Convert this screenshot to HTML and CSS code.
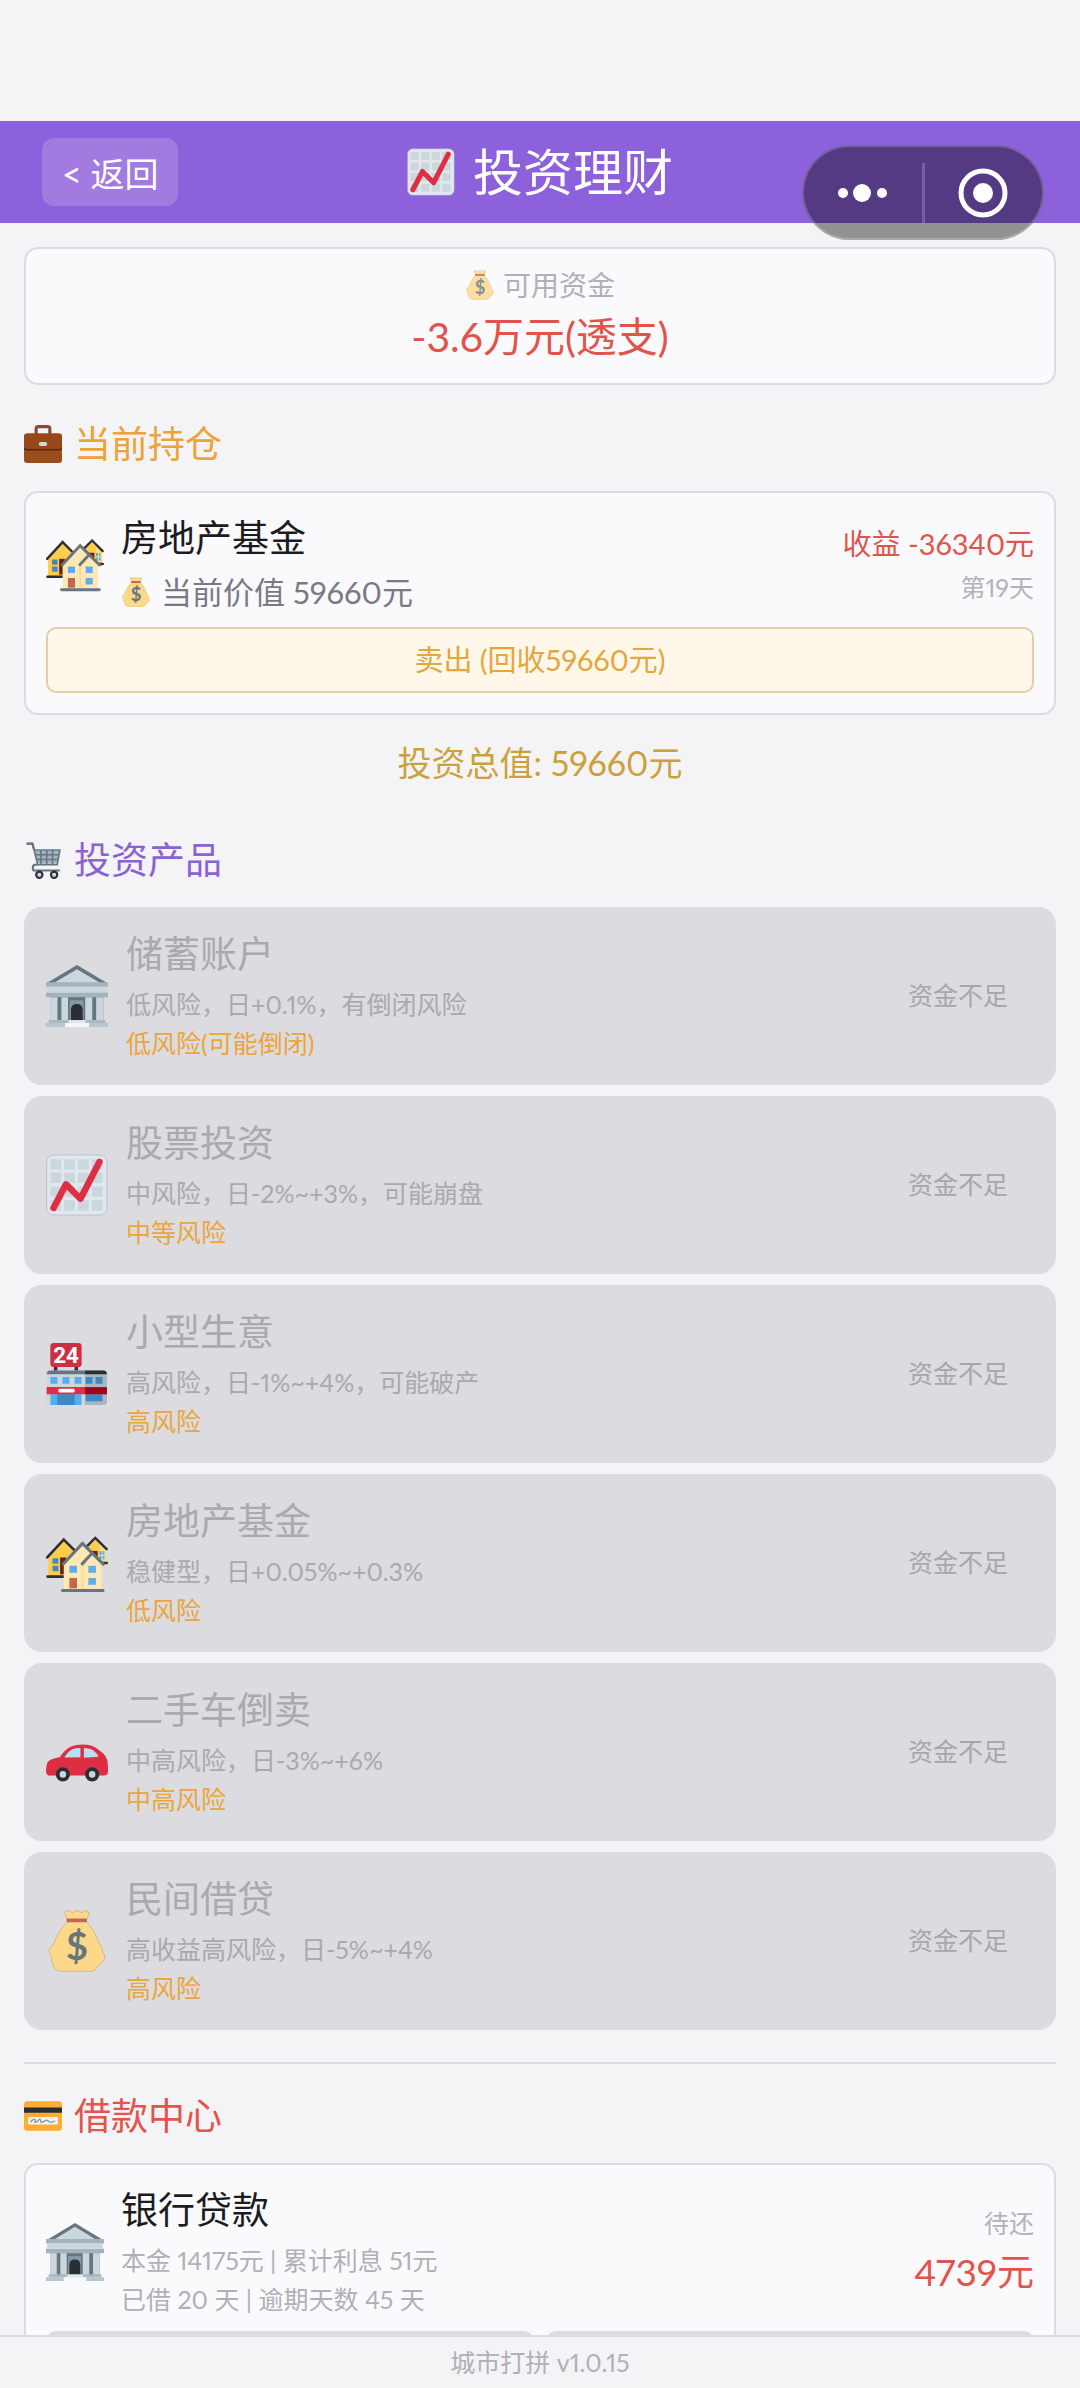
FILE: index.html
```html
<!DOCTYPE html>
<html lang="zh-CN">
<head>
    <meta charset="UTF-8">
    <meta name="viewport" content="width=device-width, initial-scale=1">
    <title>投资理财</title>
    <link rel="stylesheet" href="styles.css">
</head>
<body>
    <!-- 图标 -->
    <svg class="sprite" aria-hidden="true">
        <symbol id="i-chart" viewBox="0 0 36 36">
            <rect x="0.4" y="0.6" width="35" height="34.8" rx="4" fill="#e1e8ed" stroke="#99aab5" stroke-width="0.3"/>
            <path fill="#ccd6dd" d="M2.6 3h6.2v6H2.6zM10.6 3h6.2v6h-6.2zM18.6 3h6.2v6h-6.2zM26.6 3h6.2v6h-6.2zM2.6 10.8h6.2v6H2.6zM10.6 10.8h6.2v6h-6.2zM18.6 10.8h6.2v6h-6.2zM26.6 10.8h6.2v6h-6.2zM2.6 18.8h6.2v6H2.6zM10.6 18.8h6.2v6h-6.2zM18.6 18.8h6.2v6h-6.2zM26.6 18.8h6.2v6h-6.2zM2.6 26.9h6.2v6H2.6zM10.6 26.9h6.2v6h-6.2zM18.6 26.9h6.2v6h-6.2zM26.6 26.9h6.2v6h-6.2z"/>
            <path d="M4.4 31.3 11.6 17.6 20 26 31 4.6" fill="none" stroke="#dd2e44" stroke-width="3.8" stroke-linecap="round" stroke-linejoin="round"/>
        </symbol>
        <symbol id="i-bag" viewBox="0 0 36 36">
            <path fill="#fdd888" stroke="#b29a63" stroke-width="0.3" d="M12.4 5C10.4 2 10.4.4 12.4.5c1.500 0 2 .9 3 .9S17.200.4 18 .4s1.600 1 2.600 1 1.500-.9 3-.9c2 0 1.600 2.500-.2 5.200L23.600 7c3.400 3.700 5.900 8 7.400 13 2 1 1.600 3 2 4.500 1.600 2 1.600 5-1.500 6.500-1.500 1.300-2 4.600-6 4.600H9.500c-3.500 0-5-2-5.700-4.600-1.300-1.500-.2-3-1.100-4.500-1.700-2.700-.9-5 1.700-6.200C5.900 15 8.900 10.500 12.400 7z"/>
            <rect x="12" y="4.900" width="11.800" height="2.200" rx="0.4" fill="#bf6952"/>
            <text class="bag-sign" x="18" y="29" text-anchor="middle">$</text>
        </symbol>
        <symbol id="i-briefcase" viewBox="0 0 36 36">
            <path d="M11.500 9V3.500Q11.500 1.500 13.500 1.500h9Q24.500 1.500 24.500 3.500V9" fill="none" stroke="#8a4b38" stroke-width="3"/>
            <rect y="8" width="36" height="28" rx="3" fill="#9a4e1c"/>
            <path d="M0 11a3 3 0 0 1 3-3h30a3 3 0 0 1 3 3v10.500Q36 23.500 33 23.500H3Q0 23.500 0 21.500z" fill="#974818"/>
            <path d="M0 21Q0 23.500 3 23.500h30Q36 23.500 36 21" fill="none" stroke="#662113" stroke-width="1.300"/>
            <rect x="14" y="16" width="8" height="4" rx="2" fill="#ccd6dd"/>
        </symbol>
        <symbol id="i-houses" viewBox="0 0 36 36">
            <path d="M28.600 4.500 24 9v8.500h11V10z" fill="#ffd983"/>
            <path d="M28.600 4.500 24 9v4l7 4.500V7z" fill="#ffcc4d"/>
            <path d="M26 11h4v7h-4z" fill="#662113"/>
            <path d="M31 11.200h1.300v2H31zM31 14h1.300v1.800H31zM32.900 11.200h1v2h-1zM32.900 14h1v1.800h-1z" fill="#55acee"/>
            <path d="M24 8 28.600 3.400 35.200 10M30 18h5.300" fill="none" stroke="#292f33" stroke-width="1.400" stroke-linecap="round"/>
            <path d="M10.300 5 1.300 14.700v10.700h10.500V16L16 11z" fill="#ffcc4d"/>
            <path d="M8.200 14.800h3.500v9.800H8.200z" fill="#662113"/>
            <path d="M3.800 15.200h3.400v3.300H3.800zM3.800 19.600h3.400v3.200H3.800z" fill="#4289c1"/>
            <path d="M.7 14.800 10.300 4.400l6 6M.9 25.900h10.500" fill="none" stroke="#292f33" stroke-width="1.500" stroke-linecap="round"/>
            <path d="M21.200 7 10.300 18.500v14.800h22V18z" fill="#ffe8b6"/>
            <path d="M20.700 18.700h1v14h-1z" fill="#ffd983"/>
            <path d="M13.600 19.600H18v4h-4.400zM24.600 19.600H29v4h-4.400zM24.600 26.700H29v4h-4.400z" fill="#5dadec"/>
            <path d="M13.600 26.700H18v6h-4.400z" fill="#c1694f"/>
            <path d="M10 18.600 21.200 6.600l12 12M21 18.500l5.200-5.600M9.600 34h23.500" fill="none" stroke="#66757f" stroke-width="1.800" stroke-linecap="round"/>
        </symbol>
        <symbol id="i-cart" viewBox="0 0 36 36">
            <path d="M9.500 9h24l-2 12.500H12z" fill="#9fb3c1"/>
            <path d="M2.500 2.500H8L13 22.500h18.500L34 8.500H9.500M10.300 13h22.500M11.500 17.500h20.700M16 9v13M21.500 9v13M27 9v13" fill="none" stroke="#66757f" stroke-width="1.500"/>
            <path d="M13 22.500H9.500Q7.500 25 9 28h25" fill="none" stroke="#66757f" stroke-width="2"/>
            <path d="M2.500 2.500H8L9.500 8" fill="none" stroke="#66757f" stroke-width="2.200"/>
            <circle cx="14.500" cy="32" r="3" fill="#ccd6dd" stroke="#292f33" stroke-width="2"/>
            <circle cx="28.500" cy="32" r="3" fill="#ccd6dd" stroke="#292f33" stroke-width="2"/>
        </symbol>
        <symbol id="i-bank" viewBox="0 0 36 36">
            <path d="M18 0 35.500 10.500H.5z" fill="#66757f"/>
            <path d="M18 2.400 31.500 10.500h-27z" fill="#ccd6dd"/>
            <path d="M2.600 18h30.800v15H2.600z" fill="#99aab5"/>
            <path d="M6.600 18h2.400v14H6.600zM26.800 18h2.400v14h-2.400zM12.600 18h10.400v14H12.600z" fill="#66757f"/>
            <path d="M13.800 20.500h8V32h-8z" fill="#8899a6"/>
            <path d="M2.600 18.800h4V32h-4zM9 18.800h3.800V32H9zM22.800 18.800h4V32h-4zM29.200 18.800h4V32h-4z" fill="#ccd6dd"/>
            <path d="M14.500 32v-6q0-3.400 3.400-3.400T21.300 26v6z" fill="#292f33"/>
            <path d="M0 10h36v2.700H0zM0 16h36v2.700H0z" fill="#a2b3be"/>
            <path d="M.7 12.700h34.600V16H.7z" fill="#ccd6dd"/>
            <path d="M1.600 32h32.800v1.700H1.600z" fill="#aab8c2"/>
            <path d="M0 33.700h36V36H0z" fill="#b8c5ce"/>
            <path d="M13 32h10v1.700H13z" fill="#e1e8ed"/>
            <path d="M11 33.700h14V36H11z" fill="#f5f8fa"/>
        </symbol>
        <symbol id="i-store" viewBox="0 0 36 36">
            <path d="M4.600 13h2v4h-2zM16.600 13h2v4h-2z" fill="#292f33"/>
            <rect x="2.500" width="18.200" height="14" rx="2" fill="#ce2f45"/>
            <text class="store-sign" x="11.600" y="11.800" text-anchor="middle">24</text>
            <rect x="0.400" y="16" width="35" height="20" rx="2" fill="#ccd6dd"/>
            <path d="M22.600 16H33.400a2 2 0 0 1 2 2v16a2 2 0 0 1-2 2H22.600z" fill="#aab8c2"/>
            <path d="M.4 18.200a2 2 0 0 1 2-2.200h20.200v2.200z" fill="#66757f"/>
            <path d="M22.600 16h10.800a2 2 0 0 1 2 2.200H22.600z" fill="#292f33"/>
            <path d="M2.600 19.800h4v3.900h-4zM9.600 19.800h4v3.900h-4zM16.600 19.800h4v3.900h-4zM2.600 29.800h18V36h-18z" fill="#55acee"/>
            <path d="M23 19.800h4v3.900h-4zM28.800 19.800h4v3.900h-4zM23 29.800h9.800v4H23zM6.600 29.800h10V36h-10z" fill="#3b88c3"/>
            <path d="M.4 25.600h22.200v4.200H.4z" fill="#dd2e44"/>
            <path d="M22.600 25.600h12.800v4.200H22.600z" fill="#a0041e"/>
            <rect x="7.200" y="26.600" width="9.400" height="2.200" rx="0.8" fill="#fff"/>
        </symbol>
        <symbol id="i-car" viewBox="0 0 36 36">
            <path d="M0 29q.2-4 1-5.200Q3 21.500 8 21q3-4.500 6.500-6.200 3-1.200 7-1.200 5 0 8.500 2.600l3.600 3q2.400 2.400 2.400 8v2q0 2.500-2.500 2.500H3Q0 32 0 29z" fill="#dd2e44"/>
            <path d="M10.600 21.200q3-4.500 5.900-5.200 1.500-.4 3.500-.3v5.300zM22 15.700q3.500 0 5.700 1.600 2 1.500 2.800 3.500L22 21.300z" fill="#bbddf5"/>
            <circle cx="9.800" cy="31" r="3" fill="#ccd6dd" stroke="#292f33" stroke-width="2.200"/>
            <circle cx="26.800" cy="31" r="3" fill="#ccd6dd" stroke="#292f33" stroke-width="2.200"/>
        </symbol>
        <symbol id="i-card" viewBox="0 0 36 36">
            <rect y="4" width="36" height="28" rx="3" fill="#ffac33"/>
            <path d="M0 10h36v5H0z" fill="#292f33"/>
            <path d="M4 19h28v7H4z" fill="#f4f7f9"/>
            <path d="M6 24q3-4 4.500-2.600c1 1.200-1.500 3 .5 2.600s3.500-4 4.500-2.500-.5 3 1.500 2.500 3-2 4.500-2 2 2 4 2 2.500-1.500 4-1" fill="none" stroke="#8899a6" stroke-width="1.300"/>
        </symbol>
    </svg>

    <header class="header">
        <button type="button" class="back-btn">&lt; 返回</button>
        <h1 class="page-title"><svg class="icon-title"><use href="#i-chart"/></svg>投资理财</h1>
        <div class="capsule">
            <button type="button" class="capsule-btn" aria-label="更多">
                <svg viewBox="0 0 44 20" width="44" height="20" fill="#fff"><circle cx="2" cy="10" r="5"/><circle cx="21" cy="10" r="9"/><circle cx="41" cy="10" r="5"/></svg>
            </button>
            <span class="capsule-line"></span>
            <button type="button" class="capsule-btn" aria-label="关闭">
                <svg viewBox="0 0 50 50" width="50" height="50"><circle cx="25" cy="25" r="22" fill="none" stroke="#fff" stroke-width="5"/><circle cx="25" cy="25" r="10" fill="#fff"/></svg>
            </button>
        </div>
    </header>

    <main class="content">
        <section class="card funds">
            <div class="funds-label"><svg class="icon-sm"><use href="#i-bag"/></svg>可用资金</div>
            <div class="funds-amount">-3.6万元(透支)</div>
        </section>

        <h2 class="section-title orange"><svg class="icon-md"><use href="#i-briefcase"/></svg>当前持仓</h2>
        <section class="card">
            <div class="row">
                <svg class="icon-lg"><use href="#i-houses"/></svg>
                <div class="info">
                    <div class="name">房地产基金</div>
                    <div class="value"><svg class="icon-sm"><use href="#i-bag"/></svg>当前价值 59660元</div>
                </div>
                <div class="side">
                    <div class="profit">收益 -36340元</div>
                    <div class="note">第19天</div>
                </div>
            </div>
            <button type="button" class="sell-btn">卖出 (回收59660元)</button>
        </section>
        <div class="total">投资总值: 59660元</div>

        <h2 class="section-title purple"><svg class="icon-md"><use href="#i-cart"/></svg>投资产品</h2>
        <div class="products">
            <article class="product">
                <svg class="icon-xl"><use href="#i-bank"/></svg>
                <div class="info">
                    <h3 class="name">储蓄账户</h3>
                    <p class="desc">低风险，日+0.1%，有倒闭风险</p>
                    <p class="risk">低风险(可能倒闭)</p>
                </div>
                <button type="button" class="buy-btn" disabled>资金不足</button>
            </article>
            <article class="product">
                <svg class="icon-xl"><use href="#i-chart"/></svg>
                <div class="info">
                    <h3 class="name">股票投资</h3>
                    <p class="desc">中风险，日-2%~+3%，可能崩盘</p>
                    <p class="risk">中等风险</p>
                </div>
                <button type="button" class="buy-btn" disabled>资金不足</button>
            </article>
            <article class="product">
                <svg class="icon-xl"><use href="#i-store"/></svg>
                <div class="info">
                    <h3 class="name">小型生意</h3>
                    <p class="desc">高风险，日-1%~+4%，可能破产</p>
                    <p class="risk">高风险</p>
                </div>
                <button type="button" class="buy-btn" disabled>资金不足</button>
            </article>
            <article class="product">
                <svg class="icon-xl"><use href="#i-houses"/></svg>
                <div class="info">
                    <h3 class="name">房地产基金</h3>
                    <p class="desc">稳健型，日+0.05%~+0.3%</p>
                    <p class="risk">低风险</p>
                </div>
                <button type="button" class="buy-btn" disabled>资金不足</button>
            </article>
            <article class="product">
                <svg class="icon-xl"><use href="#i-car"/></svg>
                <div class="info">
                    <h3 class="name">二手车倒卖</h3>
                    <p class="desc">中高风险，日-3%~+6%</p>
                    <p class="risk">中高风险</p>
                </div>
                <button type="button" class="buy-btn" disabled>资金不足</button>
            </article>
            <article class="product">
                <svg class="icon-xl"><use href="#i-bag"/></svg>
                <div class="info">
                    <h3 class="name">民间借贷</h3>
                    <p class="desc">高收益高风险，日-5%~+4%</p>
                    <p class="risk">高风险</p>
                </div>
                <button type="button" class="buy-btn" disabled>资金不足</button>
            </article>
        </div>

        <hr class="divider">

        <h2 class="section-title red"><svg class="icon-md"><use href="#i-card"/></svg>借款中心</h2>
        <section class="card">
            <div class="row">
                <svg class="icon-lg"><use href="#i-bank"/></svg>
                <div class="info">
                    <div class="name">银行贷款</div>
                    <p class="desc">本金 14175元 | 累计利息 51元</p>
                    <p class="desc">已借 20 天 | 逾期天数 45 天</p>
                </div>
                <div class="side">
                    <div class="note">待还</div>
                    <div class="debt">4739元</div>
                </div>
            </div>
            <div class="loan-actions">
                <button type="button" class="loan-btn" aria-label="部分还款" disabled></button>
                <button type="button" class="loan-btn" aria-label="全部还清" disabled></button>
            </div>
        </section>
    </main>

    <footer class="footer">城市打拼 v1.0.15</footer>
</body>
</html>
```
FILE: styles.css
```css
* {
    box-sizing: border-box;
}
body {
    display: flex;
    flex-direction: column;
    height: 100vh;
    margin: 0;
    padding-top: 121px;
    background: #f4f4f7;
    color: #1c1c20;
    font-family: Lato, "Noto Sans CJK SC", sans-serif;
    font-size: 25px;
    font-variant-numeric: proportional-nums;
    overflow: hidden;
}
h1, h2, h3, p {
    margin: 0;
    font-weight: normal;
}
button {
    margin: 0;
    border: none;
    background: none;
    font-family: inherit;
    font-variant-numeric: inherit;
    cursor: pointer;
}
svg {
    flex: none;
}
.sprite {
    display: none;
}
.bag-sign {
    font: bold 22px Lato, sans-serif;
    fill: #67757f;
}
.store-sign {
    font: bold 13px Roboto, sans-serif;
    fill: #fff;
}

/* 图标尺寸 */
.icon-sm {
    width: 30px;
    height: 30px;
}
.icon-md {
    width: 38px;
    height: 38px;
}
.icon-title {
    width: 48px;
    height: 48px;
}
.icon-lg {
    width: 58px;
    height: 58px;
}
.icon-xl {
    width: 62px;
    height: 62px;
}

/* 顶部栏 */
.header {
    position: relative;
    flex: none;
    display: grid;
    grid-template-columns: 1fr auto 1fr;
    align-items: center;
    padding: 17px 42px;
    background: #8c61db;
    color: #fff;
}
.back-btn {
    justify-self: start;
    height: 68px;
    padding: 0 20px;
    border-radius: 12px;
    background: #a27ae0;
    color: #fff;
    font-size: 34px;
}
.page-title {
    display: flex;
    align-items: center;
    gap: 18px;
    font-size: 50px;
    line-height: 68px;
}
.capsule {
    position: absolute;
    z-index: 2;
    top: 24px;
    right: 36px;
    display: flex;
    align-items: center;
    width: 242px;
    height: 95px;
    border: 2px solid rgba(255, 255, 255, 0.2);
    border-radius: 48px;
    background: rgba(0, 0, 0, 0.4);
}
.capsule-btn {
    flex: 1;
    display: flex;
    align-items: center;
    justify-content: center;
    padding: 0;
}
.capsule-btn svg {
    overflow: visible;
}
.capsule-line {
    width: 3px;
    height: 60px;
    background: rgba(255, 255, 255, 0.2);
}

/* 内容 */
.content {
    flex: 1;
    display: flex;
    flex-direction: column;
    min-height: 0;
    padding: 24px 24px 0;
    overflow: hidden;
}
.content > * {
    flex: none;
}
.card {
    padding: 20px;
    border: 2px solid #dcdce0;
    border-radius: 14px;
    background: #fafafd;
}
.funds {
    padding: 15px 20px;
    text-align: center;
}
.funds-label {
    display: flex;
    align-items: center;
    justify-content: center;
    gap: 8px;
    color: #b0b0b6;
    font-size: 28px;
    line-height: 42px;
}
.funds-label svg {
    opacity: 0.8;
}
.funds-amount {
    color: #e0544c;
    font-size: 41px;
    line-height: 62px;
}
.section-title {
    display: flex;
    align-items: center;
    gap: 12px;
    margin: 32px 0 20px;
    font-size: 37px;
    line-height: 54px;
}
.orange {
    color: #eda338;
}
.purple {
    color: #8b62d4;
}
.red {
    color: #e2544c;
}
.row {
    display: flex;
    align-items: center;
    gap: 17px;
    margin-bottom: 12px;
}
.info {
    flex: 1;
    min-width: 0;
}
.name {
    margin-bottom: 6px;
    font-size: 37px;
    line-height: 50px;
}
.value {
    display: flex;
    align-items: center;
    gap: 10px;
    color: #7a7a84;
    font-size: 31px;
    line-height: 46px;
}
.desc, .risk {
    font-size: 25px;
    line-height: 39px;
}
.desc {
    color: #b0b0b6;
}
.risk {
    color: #eaa53b;
}
.side {
    text-align: right;
}
.profit {
    color: #e0544c;
    font-size: 29px;
    line-height: 46px;
}
.note {
    color: #b3b3b9;
    font-size: 25px;
    line-height: 40px;
}
.debt {
    color: #e0544c;
    font-size: 37px;
    line-height: 58px;
}
.sell-btn {
    display: block;
    width: 100%;
    height: 66px;
    padding: 0 0 4px;
    border: 2px solid #e2cfa8;
    border-radius: 10px;
    background: #fff8ea;
    color: #e5a63c;
    font-size: 29px;
}
.total {
    margin: 23px 0 13px;
    color: #cba13c;
    font-size: 34px;
    line-height: 50px;
    text-align: center;
}

/* 产品列表 */
.products {
    display: grid;
    gap: 11px;
}
.product {
    display: flex;
    align-items: center;
    gap: 18px;
    padding: 22px;
    border-radius: 18px;
    background: #dcdbe0;
}
.product .name, .product .desc {
    color: #a9a9af;
}
.buy-btn {
    padding: 10px 26px 14px;
    color: #a6a6ac;
    font-size: 25px;
    cursor: default;
}
.divider {
    width: 100%;
    margin: 32px 0 0;
    border: none;
    border-top: 2px solid #dadade;
}
.divider + .section-title {
    margin-top: 25px;
}
.loan-actions {
    display: grid;
    grid-template-columns: 1fr 1fr;
    gap: 12px;
}
.loan-btn {
    height: 66px;
    border-radius: 10px;
    background: #dcdce0;
}

.footer {
    flex: none;
    border-top: 2px solid #dcdce0;
    color: #b0b0b6;
    font-size: 25px;
    line-height: 51px;
    text-align: center;
}
```
